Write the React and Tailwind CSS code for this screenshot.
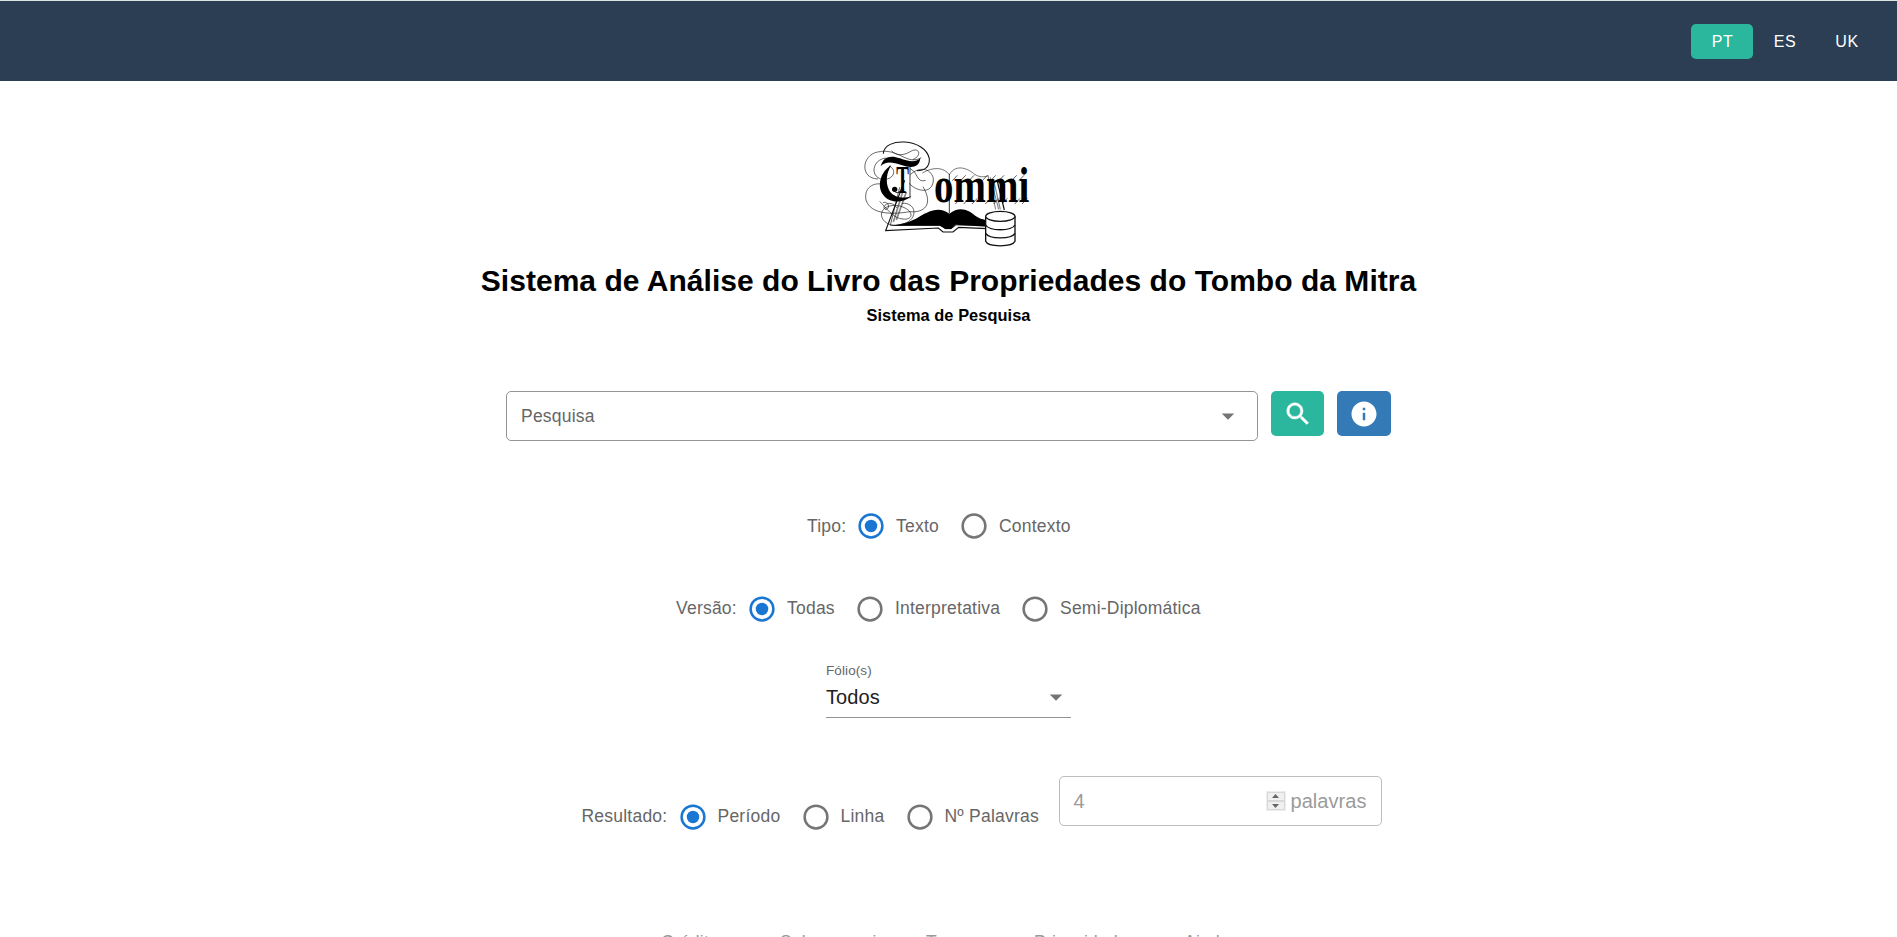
import React from 'react';

const FLOURISHES = [
  'M108 84C62 88 58 147 101 148C132 148 140 118 116 108',
  'M83 147C27 145 34 75 82 66C145 52 168 108 213 83',
  'M124 62C132 74 154 80 178 66C207 47 217 77 187 89',
  'M179 116C204 126 197 160 226 151',
  'M180 134C205 110 240 112 249 145C250 166 240 180 222 181C205 181 190 174 176 160',
  'M218 170C251 226 220 249 178 245C125 254 61 254 47 210C39 168 78 153 106 166',
  'M88 214C107 233 129 266 158 267C184 271 193 249 164 234C130 216 84 231 95 263C113 302 182 287 190 254C196 232 175 217 155 220',
  'M98 218C108 213 120 225 112 236C105 243 96 233 104 226C116 214 133 222 140 234',
];

const FEET = [318, 343, 368, 408, 433, 458, 496, 518];

function TommiLogo() {
  return (
    <svg className="h-[125px] w-[190px]" viewBox="11 0 570 375" fill="none" stroke="#111" aria-label="Tommi">
      <path d="M163 151L106 302L264 294L278 306H308L325 292L410 296" strokeWidth="3.5" />
      <path d="M148 172L120 286L272 286L285 296H302L318 285L406 287" strokeWidth="2" />
      <path d="M122 287C143 283 168 280 197 266C232 244 266 226 297 251C328 226 356 240 376 258C392 270 408 268 410 272V290L316 284L303 297H285L268 287Z" fill="#000" stroke="none" />
      <path d="M297 250V132M179 96V205" strokeWidth="2.5" />
      <path d="M216 129C248 110 280 111 297 134C318 98 356 118 373 133C388 142 400 142 414 137" strokeWidth="1.7" />
      <path d="M160 176L129 276M168 186L138 270" stroke="#888" strokeWidth="5" />
      <path d="M413 137L436 238M420 142L445 238M430 151L450 238" stroke="#888" strokeWidth="3.5" />
      <path d="M440 150L462 240" strokeWidth="3.5" />
      {FLOURISHES.map((d) => <path key={d} d={d} strokeWidth="1.9" />)}
      <path d="M99 71C101 20 224 24 237 86C238 112 222 122 200 122" strokeWidth="3.2" />
      <path d="M91 109C99 79 121 75 149 85C174 94 195 99 210 84C207 116 180 114 153 105C126 96 105 93 91 109Z" fill="#000" stroke="none" />
      <path d="M123 106C93 122 77 168 99 195C115 219 156 222 184 198C154 209 127 200 116 180C105 158 108 128 123 106Z" fill="#000" stroke="none" />
      <circle cx="133" cy="178" r="8" fill="#000" stroke="none" />
      <path d="M134 185C143 192 152 186 155 172" strokeWidth="3" />
      <text x="138" y="188" fill="#000" stroke="none" fontFamily="Liberation Serif, serif" fontSize="122" fontWeight="700" textLength="38" lengthAdjust="spacingAndGlyphs">T</text>
      <text x="251" y="217" fill="#000" stroke="none" fontFamily="Liberation Serif, serif" fontSize="152" fontWeight="700" textLength="286" lengthAdjust="spacingAndGlyphs">ommi</text>
      {FEET.map((x) => <path key={x} d={`M${x - 12} 152L${x + 3} 136M${x - 3} 222L${x + 13} 205`} strokeWidth="2" />)}
      <path d="M406 259V334C413 352 486 352 494 334V259" fill="#fff" strokeWidth="4" />
      <ellipse cx="450" cy="259" rx="44" ry="15" fill="#fff" strokeWidth="4" />
      <path d="M406 285C417 304 483 304 494 285M406 310C417 328 483 328 494 310" strokeWidth="4" />
    </svg>
  );
}

function Radio({ label, checked, width }) {
  return (
    <label className={`flex shrink-0 items-center ${width}`}>
      <svg viewBox="0 0 24 24" className="mr-[10px] size-[30px] shrink-0" fill="none">
        <circle cx="12" cy="12" r="9.1" strokeWidth="2" className={checked ? 'stroke-[#1976d2]' : 'stroke-[#757575]'} />
        {checked && <circle cx="12" cy="12" r="5" className="fill-[#1976d2]" />}
      </svg>
      <span className="whitespace-nowrap">{label}</span>
    </label>
  );
}

function Caret() {
  return <svg viewBox="0 0 24 24" className="size-[30px] fill-[#757575]"><path d="M7 10l5 5 5-5z" /></svg>;
}

function Stepper() {
  return (
    <svg viewBox="0 0 20 20" className="ml-auto size-5">
      <path d="M0 0H20V20H0Z" className="fill-[#eeeeee]" />
      <path d="M1.5 1.5H18.5V9.5H1.5ZM1.5 10.5H18.5V18.5H1.5Z" className="fill-[#f0f0f0] stroke-[#d8d8d8]" />
      <path d="M6 7L9.5 3L13 7ZM6 13L9.5 17L13 13Z" className="fill-[#666]" />
    </svg>
  );
}

export default function App() {
  return (
    <div className="flex h-[937px] flex-col overflow-hidden bg-white font-['Liberation_Sans',Arial,sans-serif] text-[17.5px] tracking-[0.22px] text-[#666]">
      <header className="flex h-[81px] shrink-0 items-center justify-end border-t border-[#dde3e0] bg-[#2b3e53] pr-5 pt-px text-[16px] tracking-[0.6px] text-white">
        <button className="h-[35px] w-[62px] rounded-[5px] bg-[#2ab79d] pl-px">PT</button>
        <button className="h-[35px] w-[62px] pl-[2px]">ES</button>
        <button className="h-[35px] w-[62px] pl-[2px]">UK</button>
      </header>

      <main className="flex flex-col items-center">
        <div className="mt-[49px] h-[125px]"><TommiLogo /></div>
        <h1 className="mt-[6px] h-10 whitespace-nowrap text-[30px] font-bold leading-10 tracking-[0.03px] text-black">Sistema de Análise do Livro das Propriedades do Tombo da Mitra</h1>
        <h2 className="mt-[4px] h-5 text-[16.4px] font-bold leading-5 tracking-[0.05px] text-black">Sistema de Pesquisa</h2>

        <div className="mt-[66px] flex w-[885px] items-start">
          <div className="flex h-[50px] w-[752px] items-center justify-between rounded-[5px] border border-[#949494] pl-[14px] pr-[14px]">
            <span>Pesquisa</span>
            <Caret />
          </div>
          <button className="ml-[13px] flex h-[45px] w-[53px] items-center justify-center rounded-[5px] bg-[#2ab79d]">
            <svg viewBox="0 0 24 24" className="size-[30px] fill-white stroke-white stroke-[0.3]"><path d="M15.5 14h-.79l-.28-.27C15.41 12.59 16 11.11 16 9.5 16 5.91 13.09 3 9.5 3S3 5.91 3 9.5 5.91 16 9.5 16c1.61 0 3.09-.59 4.23-1.57l.27.28v.79l5 4.99L20.49 19l-4.99-5zm-6 0C7.01 14 5 11.99 5 9.5S7.01 5 9.5 5 14 7.01 14 9.5 11.99 14 9.5 14z" /></svg>
          </button>
          <button className="ml-[13px] flex h-[45px] w-[54px] items-center justify-center rounded-[5px] bg-[#337ab7]">
            <svg viewBox="0 0 24 24" className="size-[30px] fill-white"><path d="M12 2C6.48 2 2 6.48 2 12s4.48 10 10 10 10-4.48 10-10S17.52 2 12 2zm1 15h-2v-6h2v6zm0-8h-2V7h2v2z" /></svg>
          </button>
        </div>

        <div className="mt-[70px] flex h-[30px] w-[283px] items-center">
          <span className="w-[49px] shrink-0">Tipo:</span>
          <Radio label="Texto" checked width="w-[103px]" />
          <Radio label="Contexto" width="w-[131px]" />
        </div>

        <div className="mt-[52.5px] flex h-[30px] w-[545px] items-center">
          <span className="w-[71px] shrink-0">Versão:</span>
          <Radio label="Todas" checked width="w-[108px]" />
          <Radio label="Interpretativa" width="w-[165px]" />
          <Radio label="Semi-Diplomática" width="w-[201px]" />
        </div>

        <div className="mt-[38.5px] h-[56px] w-[245px] border-b border-[#949494]">
          <div className="h-[18px] text-[13.5px] leading-[18px] tracking-[0.1px]">Fólio(s)</div>
          <div className="flex h-[33px] items-center justify-between text-[20px] tracking-[0.1px] text-[#212121]">
            <span>Todos</span>
            <Caret />
          </div>
        </div>

        <div className="ml-[67px] mt-[58px] flex h-[56px] w-[801px] items-start">
          <div className="mt-[25.5px] flex h-[30px] items-center">
            <span className="w-[96px] shrink-0">Resultado:</span>
            <Radio label="Período" checked width="w-[123px]" />
            <Radio label="Linha" width="w-[104px]" />
            <Radio label="Nº Palavras" width="w-[154px]" />
          </div>
          <div className="flex h-[50px] w-[323px] items-center rounded-[5px] border border-[#bdbdbd] px-[14px] text-[20px] tracking-[0.05px] text-[#9b9b9b]">
            <span>4</span>
            <Stepper />
            <span className="ml-[5px]">palavras</span>
          </div>
        </div>
      </main>

      <footer className="mt-[98px] flex h-6 shrink-0 justify-start whitespace-nowrap pl-[661px] leading-6 text-[#999]">
        <span className="w-[119px]">Créditos</span>
        <span className="w-[146px]">Sobre mami</span>
        <span className="w-[108px]">Termos</span>
        <span className="w-[150px]">Privacidade</span>
        <span>Ajuda</span>
      </footer>
    </div>
  );
}
